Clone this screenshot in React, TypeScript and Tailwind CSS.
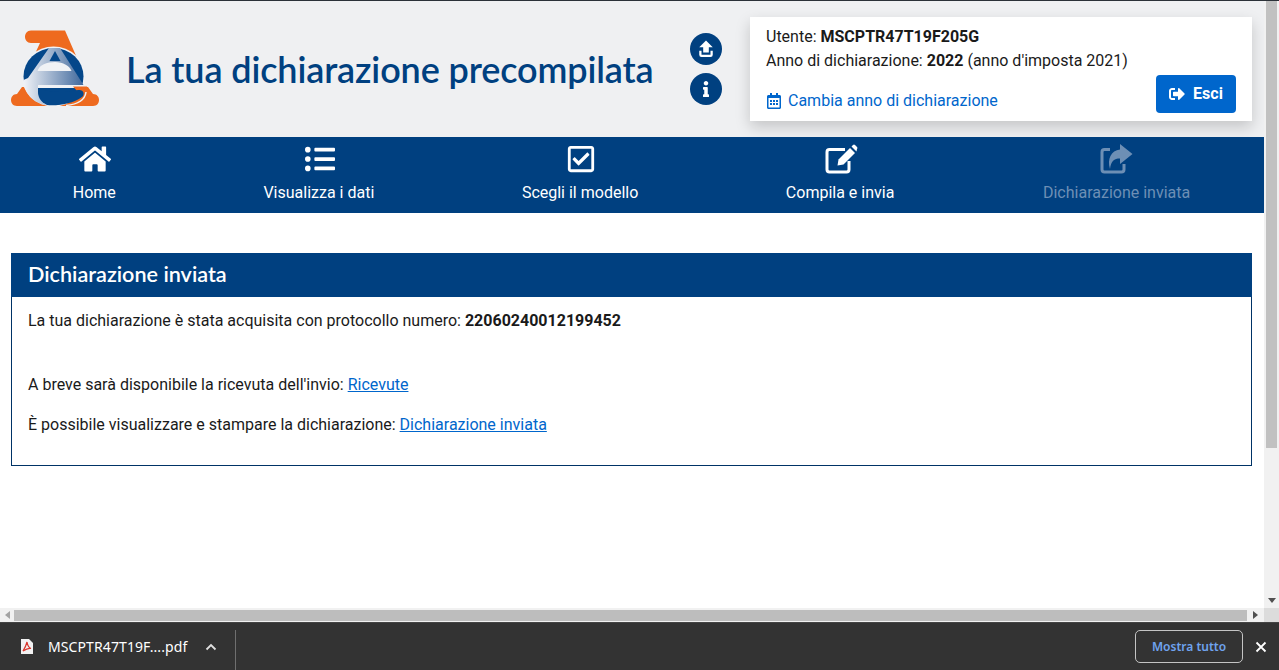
import { FaHome, FaListUl, FaRegCheckSquare, FaSignOutAlt, FaRegCalendarAlt, FaInfo } from "react-icons/fa";
import { ReactNode } from "react";

const EditIcon = () => (
  <svg width="33" height="30" viewBox="0 0 33 30" fill="currentColor">
    <path d="M20 5.5 H4.5 Q2 5.5 2 8 V25.5 Q2 28 4.5 28 H21.5 Q24 28 24 25.5 V17" fill="none" stroke="currentColor" strokeWidth="3" />
    <path d="M13.5 15.5 L25 4 L30 9 L18.5 20.5 L12.5 21.5 Z" />
    <path d="M26.5 2.5 L28 1 Q29 0 30 1 L32 3 Q33 4 32 5 L31.5 7.5 Z" />
  </svg>
);

const ShareIcon = () => (
  <svg width="33" height="30" viewBox="0 0 33 30" fill="currentColor">
    <path d="M10 5.5 H4.5 Q2 5.5 2 8 V25.5 Q2 28 4.5 28 H21.5 Q24 28 24 25.5 V20" fill="none" stroke="currentColor" strokeWidth="3" />
    <path d="M20 0 L32.5 10 L20 20 V14.5 C14 14.5 11 17 10 25 C7 15 11 6.5 20 5.5 Z" />
  </svg>
);

const navItems: { label: string; icon: ReactNode; disabled?: boolean }[] = [
  { label: "Home", icon: <FaHome size={32} /> },
  { label: "Visualizza i dati", icon: <FaListUl size={30} /> },
  { label: "Scegli il modello", icon: <FaRegCheckSquare size={30} /> },
  { label: "Compila e invia", icon: <EditIcon /> },
  { label: "Dichiarazione inviata", icon: <ShareIcon />, disabled: true },
];

const Logo = () => (
  <svg width="88" height="78" viewBox="0 0 88 78" className="shrink-0">
    <defs>
      <linearGradient id="egrad" x1="0" x2="1" y1="0" y2="0">
        <stop offset="0" stopColor="#f1f3f8" />
        <stop offset="1" stopColor="#3f689c" />
      </linearGradient>
    </defs>
    <path d="M20 0.5 H54 L66 28 H22 L29 13 H20 C12 13 12 0.5 20 0.5 Z" fill="#ee6a1f" />
    <path d="M11 57 H77 L82 64 C90 64 90 76 82 76 H6 C-2 76 -2 64 6 64 Z" fill="#ee6a1f" />
    <ellipse cx="42.5" cy="46.5" rx="31.5" ry="30" fill="#f0f2f5" />
    <ellipse cx="42.5" cy="46.5" rx="30" ry="28.5" fill="#04478a" />
    <path d="M38 18 H49 L72.5 55 H27 V62 C27 68 31 73 36 75 C22 74 12.5 62 12.5 50 L17 48 Z" fill="url(#egrad)" />
    <path d="M44 21 L49.5 31 H38.5 Z" fill="#04478a" />
    <path d="M26.5 41 C28 35 36 32 44 32 C52 32 59 36 60.5 41 Z" fill="#f0f2f5" />
    <path d="M27 55 H73 V58 H27 Z" fill="#f0f2f5" />
    <path d="M62 56.5 H76 L78 63 L66 61 Z" fill="#ee6a1f" />
    <path d="M27 58 C38 63 54 63 67 60 C73 59 74 65 71 67 C62 74 46 76 36 75 C31 72 27 66 27 58 Z" fill="#04478a" />
    <path d="M55 75.5 C66 74.5 74 70 75 62" stroke="#f0f2f5" strokeWidth="1.5" fill="none" />
  </svg>
);

export default function App() {
  return (
    <div className="h-[670px] w-[1279px] flex flex-col overflow-hidden bg-white text-base text-[#1a1a1a] font-['Roboto',sans-serif]">
      <div className="flex h-[608px] border-t border-[#2b3138]">
        <div className="w-[1264px] flex flex-col">
          <header className="h-[136px] bg-[#eff0f2] flex items-center pl-[11px] pr-3">
            <Logo />
            <h1 className="ml-[27px] w-[564px] text-[36px] leading-none font-semibold text-[#004080] font-['Lato',sans-serif] tracking-[-0.12px] whitespace-nowrap">
              La tua dichiarazione precompilata
            </h1>
            <div className="flex flex-col gap-2 mr-7">
              <span className="w-8 h-8 rounded-full bg-[#004080] text-white flex items-center justify-center">
                <svg width="18" height="18" viewBox="0 0 16 16" fill="currentColor">
                  <path d="M8 0.5 L14 6.5 H10.5 V11 H5.5 V6.5 H2 Z" />
                  <path d="M2 9.5 H4 V13 H12 V9.5 H14 V13 Q14 15 12 15 H4 Q2 15 2 13 Z" />
                </svg>
              </span>
              <span className="w-8 h-8 rounded-full bg-[#004080] text-white flex items-center justify-center">
                <FaInfo size={16} />
              </span>
            </div>
            <div className="w-[502px] h-[104px] bg-white shadow-[0_6px_14px_rgba(0,0,0,0.18)] pl-4 pr-4 pt-2 flex flex-col">
              <p className="leading-6">
                Utente: <b>MSCPTR47T19F205G</b>
              </p>
              <p className="leading-6">
                Anno di dichiarazione: <b>2022</b> (anno d'imposta 2021)
              </p>
              <div className="flex items-start justify-between mt-[2px]">
                <a className="flex items-center gap-[6px] text-[#0066cc] mt-[14px] leading-6">
                  <FaRegCalendarAlt size={16} />
                  Cambia anno di dichiarazione
                </a>
                <button className="w-20 h-[38px] rounded bg-[#0066cc] text-white font-bold flex items-center justify-center gap-2">
                  <FaSignOutAlt size={16} />
                  Esci
                </button>
              </div>
            </div>
          </header>
          <nav className="h-[76px] bg-[#004080] flex justify-around">
            {navItems.map((item) => (
              <div
                key={item.label}
                className={`flex flex-col items-center ${item.disabled ? "text-[#6d8fb5]" : "text-white"}`}
              >
                <div className="h-[44px] flex items-center justify-center">{item.icon}</div>
                <span className={`leading-6 ${item.disabled ? "" : "-translate-x-px"}`}>{item.label}</span>
              </div>
            ))}
          </nav>
          <main className="flex-1 pt-10 pl-[11px] pr-3">
            <section className="h-[213px] border border-[#003366] border-t-0">
              <h2 className="h-11 -mx-px pb-0.5 bg-[#004080] text-white text-[21.6px] font-semibold font-['Lato',sans-serif] pl-[17px] flex items-center">
                Dichiarazione inviata
              </h2>
              <div className="pl-4 pt-3">
                <p className="leading-6 mb-10">
                  La tua dichiarazione è stata acquisita con protocollo numero: <b>22060240012199452</b>
                </p>
                <p className="leading-6 mb-4">
                  A breve sarà disponibile la ricevuta dell'invio: <a className="text-[#0066cc] underline">Ricevute</a>
                </p>
                <p className="leading-6">
                  È possibile visualizzare e stampare la dichiarazione: <a className="text-[#0066cc] underline">Dichiarazione inviata</a>
                </p>
              </div>
            </section>
          </main>
        </div>
        <div className="w-[15px] bg-[#f1f1f1] flex flex-col items-center">
          <div className="w-[11px] h-[447px] bg-[#c1c1c1]" />
          <div className="flex-1" />
          <div className="h-[15px] flex items-center justify-center">
            <div className="w-0 h-0 border-x-[4px] border-x-transparent border-t-[5px] border-t-[#505050]" />
          </div>
        </div>
      </div>
      <div className="h-[14px] bg-[#f1f1f1] flex items-center">
        <div className="w-[14px] flex items-center justify-center">
          <div className="w-0 h-0 border-y-[4px] border-y-transparent border-r-[5px] border-r-[#a3a3a3]" />
        </div>
        <div className="w-[1233px] h-[11px] bg-[#bdbdbd]" />
        <div className="w-[17px] flex items-center justify-center">
          <div className="w-0 h-0 border-y-[4px] border-y-transparent border-l-[5px] border-l-[#505050]" />
        </div>
        <div className="w-[15px] h-full bg-[#dcdcdc]" />
      </div>
      <footer className="h-[48px] bg-[#333333] border-t border-[#444] flex items-center text-sm text-white font-['Noto_Sans',sans-serif]">
        <div className="w-[235px] flex items-center pl-[21px] shrink-0">
          <svg width="12" height="15" viewBox="0 0 12 15" className="shrink-0">
            <path d="M0 0 H8 L12 4 V15 H0 Z" fill="#f2f2f2" />
            <path d="M6 3 C5 7 4 9 2 12 C5 10 8 9 10 9.5 C7 8.5 6.5 6 6 3 Z" fill="none" stroke="#d9342b" strokeWidth="1.2" />
          </svg>
          <span className="ml-[15px] tracking-[0.1px]">MSCPTR47T19F....pdf</span>
          <svg width="12" height="8" viewBox="0 0 12 8" className="ml-[18px]">
            <path d="M1.5 6.5 L6 2 L10.5 6.5" fill="none" stroke="#e0e0e0" strokeWidth="1.8" />
          </svg>
        </div>
        <div className="w-px h-10 self-end bg-[#6f6f6f]" />
        <div className="flex-1" />
        <button className="w-[108px] h-[33px] border border-[#c4c4c4] rounded-[5px] text-[#6fa3ef] font-semibold text-xs">
          Mostra tutto
        </button>
        <svg width="12" height="12" viewBox="0 0 12 12" className="ml-3 mr-3">
          <path d="M1.5 1.5 L10.5 10.5 M10.5 1.5 L1.5 10.5" stroke="#ffffff" strokeWidth="1.8" />
        </svg>
      </footer>
    </div>
  );
}
